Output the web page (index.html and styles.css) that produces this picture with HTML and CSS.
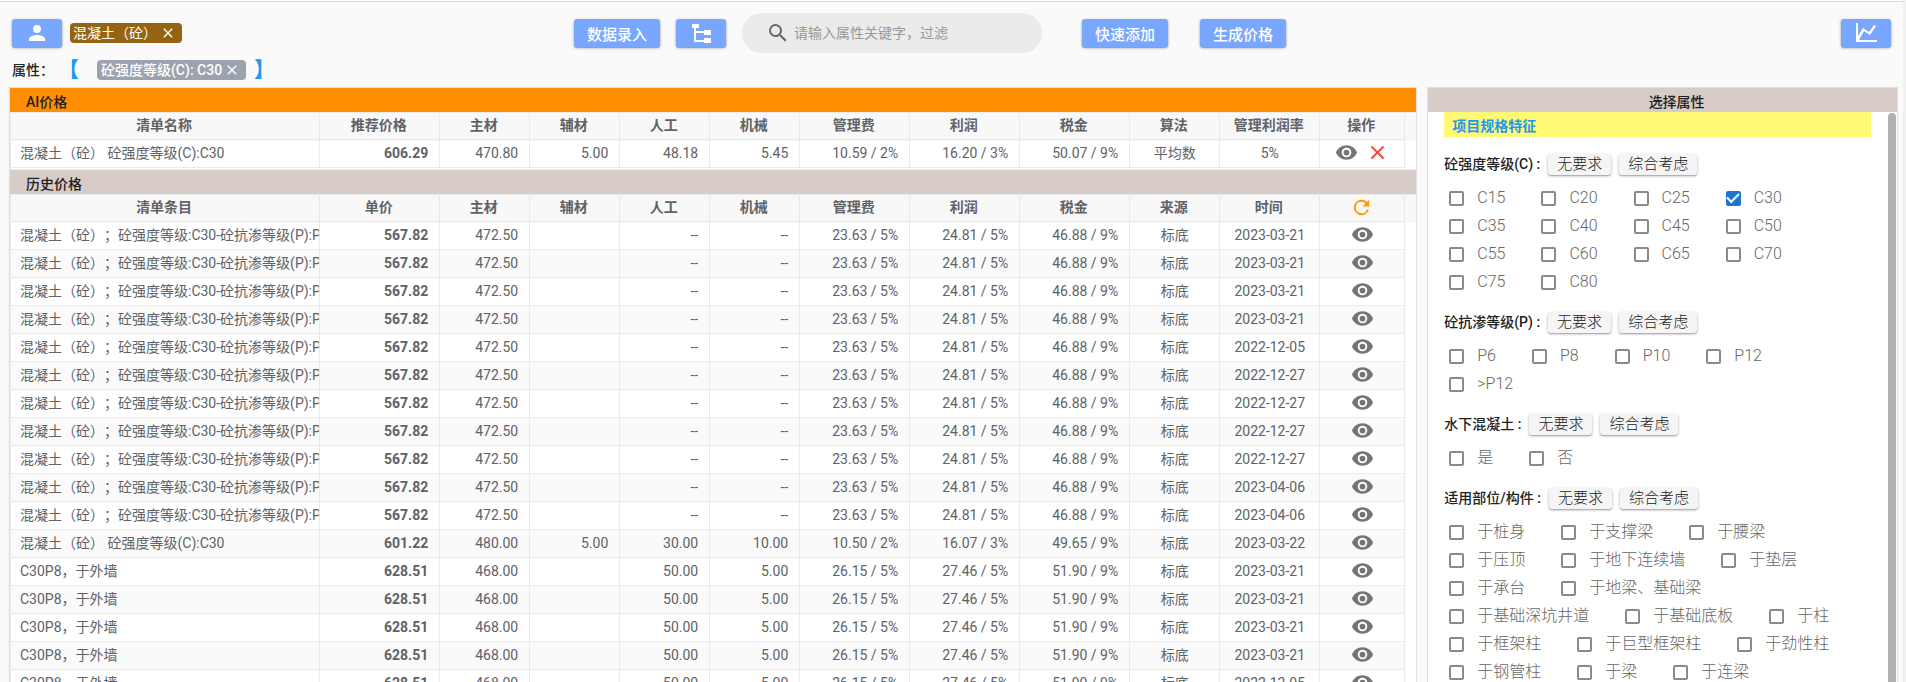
FILE: index.html
```html
<!DOCTYPE html>
<html lang="zh-CN">
<head>
    <meta charset="UTF-8">
    <meta name="viewport" content="width=device-width, initial-scale=1.0">
    <title>价格数据</title>
    <link rel="stylesheet" href="styles.css">
</head>
<body>
    <svg class="sprite">
        <symbol id="eye" viewBox="0 0 24 24"><path d="M12 4.500C7 4.500 2.730 7.610 1 12c1.730 4.390 6 7.500 11 7.500s9.270-3.110 11-7.500c-1.730-4.390-6-7.500-11-7.500zM12 17a5 5 0 1 1 0-10 5 5 0 0 1 0 10zm0-8a3 3 0 1 0 0 6 3 3 0 0 0 0-6z"/></symbol>
        <symbol id="close" viewBox="0 0 24 24"><path d="M19 6.410 17.590 5 12 10.590 6.410 5 5 6.410 10.590 12 5 17.590 6.410 19 12 13.410 17.590 19 19 17.590 13.410 12z"/></symbol>
    </svg>

    <header class="barra">
        <div class="barra-izq">
            <button class="btn icono" aria-label="用户"><svg viewBox="0 0 24 24"><path d="M12 12a4 4 0 1 0 0-8 4 4 0 0 0 0 8zm0 2c-2.670 0-8 1.340-8 4v2h16v-2c0-2.660-5.330-4-8-4z"/></svg></button>
            <span class="chip marron">混凝土（砼）<button aria-label="移除"><svg><use href="#close"/></svg></button></span>
        </div>
        <button class="btn">数据录入</button>
        <button class="btn icono" aria-label="树形"><svg viewBox="0 0 24 24"><path d="M3 3h7v4H7v3h8V9h7v5h-7v-2H7v7h8v-2h7v5h-7v-1H5V7H3z"/></svg></button>
        <label class="buscador">
            <svg viewBox="0 0 24 24"><path d="M15.500 14h-.79l-.28-.27A6.470 6.470 0 0 0 16 9.500 6.500 6.500 0 1 0 9.500 16c1.610 0 3.090-.59 4.230-1.570l.27.28v.79l5 4.990L20.490 19zm-6 0a4.500 4.500 0 1 1 0-9 4.500 4.500 0 0 1 0 9z"/></svg>
            <input type="text" aria-label="过滤" placeholder="请输入属性关键字，过滤">
        </label>
        <button class="btn rapido">快速添加</button>
        <button class="btn generar">生成价格</button>
        <button class="btn icono grafico" aria-label="图表"><svg viewBox="0 0 24 24"><path d="M2 2h2v13l5-8 6 4 5-7 2 1-6 9-6-4-5 9h18v2H2z"/></svg></button>
    </header>

    <div class="atributos">
        <span class="titulo">属性：</span>
        <span class="corchete">【</span>
        <span class="chip gris">砼强度等级(C): C30<button aria-label="移除"><svg><use href="#close"/></svg></button></span>
        <span class="corchete cierre">】</span>
    </div>

    <main class="paneles">
        <section class="panel">
            <h2 class="cabecera naranja">AI价格</h2>
            <div class="tabla ia">
                <table>
                    <thead>
                        <tr><th>清单名称</th><th class="c120">推荐价格</th><th class="c90">主材</th><th class="c90">辅材</th><th class="c90">人工</th><th class="c90">机械</th><th class="c110">管理费</th><th class="c110">利润</th><th class="c110">税金</th><th class="c90">算法</th><th class="c100">管理利润率</th><th class="c85">操作</th></tr>
                    </thead>
                    <tbody id="filas-ia"></tbody>
                </table>
            </div>
            <h2 class="cabecera">历史价格</h2>
            <div class="tabla">
                <table>
                    <thead>
                        <tr><th>清单条目</th><th class="c120">单价</th><th class="c90">主材</th><th class="c90">辅材</th><th class="c90">人工</th><th class="c90">机械</th><th class="c110">管理费</th><th class="c110">利润</th><th class="c110">税金</th><th class="c90">来源</th><th class="c100">时间</th><th class="c85"><button class="accion recargar" aria-label="刷新"><svg viewBox="0 0 24 24"><path d="M17.650 6.350A8 8 0 1 0 19.730 14h-2.080A6 6 0 1 1 12 6c1.660 0 3.140.69 4.220 1.780L13 11h7V4z"/></svg></button></th></tr>
                    </thead>
                    <tbody id="filas-historico"></tbody>
                </table>
            </div>
        </section>

        <section class="panel">
            <h2 class="cabecera centrada">选择属性</h2>
            <div class="desplazable">
                <div class="opciones">
                    <h3 class="destacado">项目规格特征</h3>
                    <div id="grupos"></div>
                </div>
                <div class="scroll"></div>
            </div>
        </section>
    </main>

    <script>
        const ver = '<button class="accion" aria-label="查看"><svg><use href="#eye"/></svg></button>'
        const borrar = '<button class="accion borrar" aria-label="删除"><svg><use href="#close"/></svg></button>'

        function crearFila(datos, acciones){
            const celdas = datos.map(dato => `<td>${dato}</td>`).join('')
            return `<tr>${celdas}<td>${acciones}</td></tr>`
        }

        const ia = ['混凝土（砼） 砼强度等级(C):C30', '606.29', '470.80', '5.00', '48.18', '5.45', '10.59 / 2%', '16.20 / 3%', '50.07 / 9%', '平均数', '5%']
        document.getElementById('filas-ia').innerHTML = crearFila(ia, ver + borrar)

        const tipoA = ['混凝土（砼）；砼强度等级:C30-砼抗渗等级(P):P8', '567.82', '472.50', '', '--', '--', '23.63 / 5%', '24.81 / 5%', '46.88 / 9%', '标底']
        const tipoB = ['混凝土（砼） 砼强度等级(C):C30', '601.22', '480.00', '5.00', '30.00', '10.00', '10.50 / 2%', '16.07 / 3%', '49.65 / 9%', '标底']
        const tipoC = ['C30P8，于外墙', '628.51', '468.00', '', '50.00', '5.00', '26.15 / 5%', '27.46 / 5%', '51.90 / 9%', '标底']
        // tipo de fila, fecha y cantidad de veces que se repite
        const historico = [
            [tipoA, '2023-03-21', 4],
            [tipoA, '2022-12-05', 1],
            [tipoA, '2022-12-27', 4],
            [tipoA, '2023-04-06', 2],
            [tipoB, '2023-03-22', 1],
            [tipoC, '2023-03-21', 4],
            [tipoC, '2022-12-05', 1]
        ]
        let filas = ''
        for (let [tipo, fecha, veces] of historico){
            filas += crearFila([...tipo, fecha], ver).repeat(veces)
        }
        document.getElementById('filas-historico').innerHTML = filas

        const grupos = [
            ['砼强度等级(C)', 'C15 C20 C25 C30 C35 C40 C45 C50 C55 C60 C65 C70 C75 C80'],
            ['砼抗渗等级(P)', 'P6 P8 P10 P12 &gt;P12'],
            ['水下混凝土', '是 否'],
            ['适用部位/构件', '于桩身 于支撑梁 于腰梁 于压顶 于地下连续墙 于垫层 于承台 于地梁、基础梁 于基础深坑井道 于基础底板 于柱 于框架柱 于巨型框架柱 于劲性柱 于钢管柱 于梁 于连梁']
        ]
        document.getElementById('grupos').innerHTML = grupos.map(([nombre, valores]) => `
            <fieldset class="grupo">
                <div class="grupo-titulo"><span>${nombre} :</span><button>无要求</button><button>综合考虑</button></div>
                <div class="casillas">
                    ${valores.split(' ').map(v => `<label><input type="checkbox" ${v == 'C30' ? 'checked' : ''}>${v}</label>`).join('')}
                </div>
            </fieldset>`).join('')
    </script>
</body>
</html>
```
FILE: styles.css
```css
*{
    box-sizing: border-box;
}
body{
    margin: 0;
    padding-top: 1px;
    height: 100vh;
    overflow: hidden;
    display: flex;
    flex-direction: column;
    font-family: Roboto, "Noto Sans CJK SC", sans-serif;
    font-size: 14px;
    line-height: 20px;
    text-spacing-trim: space-all;
    color: #212121;
    background: #fafafa;
    border-right: 3px solid #f1f1f1;
}
button, input{
    font-family: inherit;
}
button{
    border: 0;
    padding: 0;
    cursor: pointer;
}
svg{
    fill: currentColor;
}
h2, h3{
    margin: 0;
    font-size: 14px;
    font-weight: 500;
}
.sprite{
    display: none;
}

/* barra superior */
.barra{
    display: flex;
    align-items: center;
    gap: 16px;
    height: 57px;
    padding: 6px 12px 0;
    border-top: 1px solid #dadcdc;
}
.barra-izq{
    display: flex;
    align-items: center;
    gap: 8px;
    flex: 0 0 546px;
}
.btn{
    height: 28px;
    padding: 0 13px;
    border-radius: 3px;
    background: #79a6ff;
    color: #fff;
    font-size: 15px;
    font-weight: 500;
    white-space: nowrap;
    box-shadow: 0 1px 3px rgba(0, 0, 0, .35), 0 1px 1px rgba(0, 0, 0, .2);
}
.icono{
    width: 50px;
    padding: 0;
    display: flex;
    align-items: center;
    justify-content: center;
}
.icono svg{
    width: 24px;
    height: 24px;
}
.rapido{
    margin-left: 24px;
}
.generar{
    margin-left: 16px;
}
.grafico{
    margin-left: auto;
}
.buscador{
    display: flex;
    align-items: center;
    gap: 2px;
    width: 300px;
    height: 40px;
    padding: 0 24px;
    border-radius: 20px;
    background: #ebebeb;
    color: #666;
}
.buscador svg{
    width: 24px;
    height: 24px;
    flex: none;
}
.buscador input{
    width: 100%;
    border: 0;
    outline: 0;
    background: none;
    font-size: 14px;
}
.buscador input::placeholder{
    color: #999;
}
.chip{
    display: flex;
    align-items: center;
    height: 20px;
    border-radius: 4px;
    color: #fff;
}
.chip button{
    display: flex;
    background: none;
    color: #fff;
}
.chip svg{
    width: 16px;
    height: 16px;
}
.marron{
    gap: 3px;
    padding: 0 6px 0 3px;
    background: #956413;
}
.gris{
    gap: 2px;
    padding: 0 6px 0 4px;
    background: #9ca3af;
    font-weight: 500;
}

/* atributos elegidos */
.atributos{
    display: flex;
    align-items: center;
    height: 30px;
    padding: 0 12px 6px;
}
.titulo{
    width: 46px;
    font-weight: 500;
}
.corchete{
    width: 39px;
    color: #2196f3;
    font-size: 21px;
    font-weight: 700;
}
.cierre{
    padding-left: 8px;
}

/* paneles */
.paneles{
    flex: 1;
    min-height: 0;
    display: grid;
    grid-template-columns: 3fr 1fr;
    gap: 12px;
    padding: 0 6px 0 10px;
}
.panel{
    min-width: 0;
    overflow: hidden;
    display: flex;
    flex-direction: column;
    background: #fff;
    box-shadow: 0 0 1px 1px #e0e0e0;
}
.cabecera{
    flex: none;
    height: 24px;
    padding: 4px 16px 0;
    background: #d7ccc8;
}
.naranja{
    background: #ff8f00;
}
.centrada{
    padding-left: 44px;
    text-align: center;
}

/* tablas */
.tabla{
    padding-right: 11px;
    background: linear-gradient(#f8f8f9 28px, #fff 28px);
    border: solid #e8eaec;
    border-width: 1px 0 0 1px;
}
.ia{
    padding-bottom: 1px;
    border-bottom-width: 1px;
}
table{
    width: 100%;
    table-layout: fixed;
    border-collapse: separate;
    border-spacing: 0;
    color: #606266;
}
th, td{
    height: 28px;
    padding: 0 11px 2px 9px;
    border-right: 1px solid #e8eaec;
    border-bottom: 1px solid #e8eaec;
    line-height: 20px;
    white-space: nowrap;
    overflow: hidden;
    text-align: right;
}
thead th{
    height: 27px;
    text-align: center;
    font-weight: 700;
}
.c85{
    width: 85px;
}
.c90{
    width: 90px;
}
.c100{
    width: 100px;
}
.c110{
    width: 110px;
}
.c120{
    width: 120px;
}
td:first-child{
    padding-right: 0;
    text-align: left;
}
td:nth-child(2){
    font-weight: 700;
}
td:nth-child(n+10){
    padding: 0 0 2px;
    text-align: center;
}
tbody tr:nth-child(even){
    background: #fafafa;
}
.accion{
    width: 23px;
    height: 23px;
    background: none;
    color: #757575;
    vertical-align: middle;
}
.accion svg{
    display: block;
    width: 100%;
    height: 100%;
}
.borrar{
    margin-left: 8px;
    color: #f44336;
}
.recargar{
    color: #ff9800;
}

/* panel de opciones */
.desplazable{
    flex: 1;
    min-height: 0;
    display: flex;
    justify-content: space-between;
}
.opciones{
    flex: 1;
    margin: 0 17px 0 16px;
    overflow: hidden;
}
.destacado{
    height: 25px;
    padding: 4px 8px;
    margin-bottom: 12px;
    background: #fff976;
    color: #2196f3;
    font-weight: 700;
}
.scroll{
    width: 8px;
    margin: 1px 1px 0 0;
    border-radius: 4px 4px 0 0;
    background: #b1b1b1;
}
.grupo{
    border: 0;
    margin: 0 0 11px;
    padding: 0;
}
.grupo-titulo{
    display: flex;
    align-items: center;
    gap: 8px;
    height: 35px;
    padding-bottom: 5px;
    font-weight: 500;
}
.grupo-titulo button{
    height: 21px;
    padding: 0 9px;
    border-radius: 3px;
    background: #f5f5f5;
    color: #212121;
    font-size: 15px;
    font-weight: 300;
    line-height: 21px;
    box-shadow: 0 1px 3px rgba(0, 0, 0, .3), 0 1px 1px rgba(0, 0, 0, .15);
}
.casillas{
    display: flex;
    flex-wrap: wrap;
}
.casillas label{
    display: flex;
    align-items: center;
    height: 28px;
    padding: 0 31px 0 5px;
    color: #666;
    font-size: 16px;
    font-weight: 300;
    white-space: nowrap;
}
.casillas input{
    appearance: none;
    width: 15px;
    height: 15px;
    margin: 0 13px 0 0;
    border: 2px solid #8a8a8a;
    border-radius: 2px;
}
.casillas input:checked{
    display: grid;
    place-content: center;
    border-color: #1976d2;
    background: #1976d2;
}
.casillas input:checked::before{
    content: '';
    width: 10px;
    height: 5px;
    margin-bottom: 3px;
    border: solid #fff;
    border-width: 0 0 2px 2px;
    transform: rotate(-45deg);
}
```
